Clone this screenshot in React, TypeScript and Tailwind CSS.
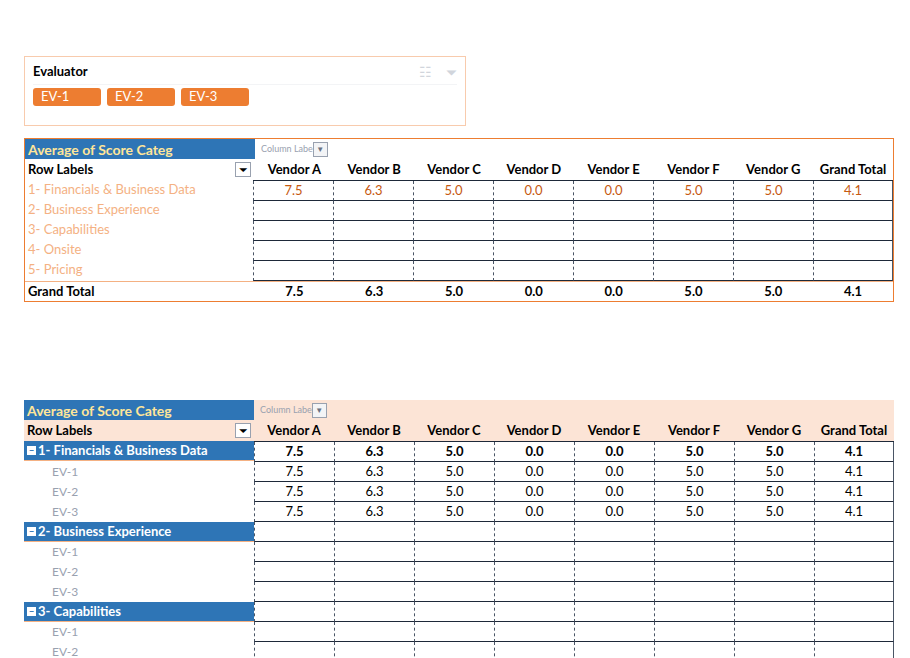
const vendors = ["Vendor A","Vendor B","Vendor C","Vendor D","Vendor E","Vendor F","Vendor G","Grand Total"];
const t1 = ["7.5","6.3","5.0","0.0","0.0","5.0","5.0","4.1"];
const cats1 = ["1- Financials & Business Data","2- Business Experience","3- Capabilities","4- Onsite","5- Pricing"];

function Cells({ vals, bold, orange, top }: { vals?: string[]; bold?: boolean; orange?: boolean; top?: boolean }) {
  return (
    <div className={`flex ${top ? "border-t border-gray-800" : ""}`}>
      {vendors.map((v, i) => (
        <div key={v} className={`w-[80px] h-[20px] flex items-center justify-center border-l border-dashed border-gray-600 border-b border-b-gray-800 border-solid text-[13px] ${bold ? "font-bold text-black" : orange ? "text-[#c65911]" : "text-black"} ${i === 7 ? "border-r border-r-gray-600" : ""}`} style={{ borderLeftStyle: "dashed", borderBottomStyle: "solid" }}>
          {vals ? vals[i] : ""}
        </div>
      ))}
    </div>
  );
}

function Header({ peach }: { peach?: boolean }) {
  return (
    <>
      <div className="flex h-[20px]">
        <div className="w-[230px] bg-[#2e75b6] text-[#ffe699] font-bold text-[14px] flex items-center px-[3px]">Average of Score Categ</div>
        <div className={`flex-1 flex items-center pl-[6px] ${peach ? "bg-[#fce4d6]" : ""}`}>
          <span className="text-[9px] text-gray-400">Column Labe</span>
          <span className="w-[15px] h-[15px] border border-gray-400 bg-gray-100 flex items-center justify-center text-[8px] text-gray-500">▼</span>
        </div>
      </div>
      <div className={`flex h-[21px] ${peach ? "bg-[#fce4d6]" : ""}`}>
        <div className="w-[230px] flex items-center justify-between px-[3px] font-bold text-[13px]">
          <span>Row Labels</span>
          <span className="w-[16px] h-[15px] border border-gray-400 bg-white flex items-center justify-center text-[9px]">⏷</span>
        </div>
        {vendors.map(v => (
          <div key={v} className="w-[80px] flex items-end justify-center font-bold text-[13px] pb-[1px]">{v}</div>
        ))}
      </div>
    </>
  );
}

export default function App() {
  const groups2 = ["1- Financials & Business Data","2- Business Experience","3- Capabilities"];
  return (
    <div className="w-[910px] h-[658px] bg-white overflow-hidden" style={{ fontFamily: "Lato, 'Open Sans', sans-serif" }}>
      <div className="pt-[56px] pl-[24px]">
        <div className="w-[442px] h-[70px] border border-[#f8cbad] px-[8px] pt-[4px]">
          <div className="flex items-center justify-between border-b border-gray-100 pb-[2px]">
            <span className="font-bold text-[13px]">Evaluator</span>
            <span className="flex gap-[14px] text-gray-300 text-[14px]"><span>☷</span><span>⏷</span></span>
          </div>
          <div className="flex gap-[6px] mt-[3px]">
            {["EV-1","EV-2","EV-3"].map(e => (
              <div key={e} className="w-[68px] h-[18px] bg-[#ed7d31] rounded-[3px] text-white text-[13px] flex items-center pl-[8px]">{e}</div>
            ))}
          </div>
        </div>

        <div className="mt-[12px] w-[870px] border border-[#ed7d31]">
          <Header />
          <div className="flex">
            <div className="w-[230px]">
              {cats1.map(c => (
                <div key={c} className="h-[20px] flex items-center px-[3px] text-[13px] text-[#f4b183]">{c}</div>
              ))}
            </div>
            <div className="border-t border-gray-800">
              <Cells vals={t1} orange />
              {[0,1,2,3].map(i => <Cells key={i} />)}
            </div>
          </div>
          <div className="flex h-[20px] border-t border-[#f4b183]">
            <div className="w-[230px] px-[3px] font-bold text-[13px] flex items-center">Grand Total</div>
            {t1.map((v, i) => <div key={i} className="w-[80px] flex items-center justify-center font-bold text-[13px]">{v}</div>)}
          </div>
        </div>

        <div className="mt-[98px] w-[870px]">
          <Header peach />
          {groups2.map((g, gi) => (
            <div key={g}>
              <div className="flex">
                <div className="w-[230px] h-[20px] bg-[#2e75b6] text-white font-bold text-[13px] flex items-center px-[3px] gap-[2px] border-b border-[#f4b183]">
                  <span className="w-[9px] h-[9px] bg-white text-[#2e75b6] text-[9px] leading-[9px] flex items-center justify-center">−</span>{g}
                </div>
                <Cells vals={gi === 0 ? t1 : undefined} bold top={gi === 0} />
              </div>
              {["EV-1","EV-2","EV-3"].map(e => (
                <div key={e} className="flex">
                  <div className="w-[230px] h-[20px] pl-[28px] text-[12px] text-gray-400 flex items-center">{e}</div>
                  <Cells vals={gi === 0 ? t1 : undefined} />
                </div>
              ))}
            </div>
          ))}
        </div>
      </div>
    </div>
  );
}
